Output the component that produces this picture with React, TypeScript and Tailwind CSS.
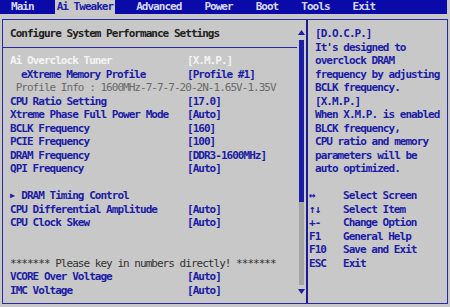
import React from "react";

const F = { fontFamily: '"DejaVu Sans Mono", "Liberation Mono", monospace' };

const tabs = ["Main", "Ai Tweaker", "Advanced", "Power", "Boot", "Tools", "Exit"];

type Row =
  | { kind: "item"; label: string; value?: string; sel?: boolean; indent?: string }
  | { kind: "info"; text: string }
  | { kind: "note"; text: string }
  | { kind: "blank" }
  | { kind: "sub"; label: string };

const rows: Row[] = [
  { kind: "item", label: "Ai Overclock Tuner", value: "[X.M.P.]", sel: true },
  { kind: "item", label: "eXtreme Memory Profile", value: "[Profile #1]", indent: "pl-[11px]" },
  { kind: "info", text: " Profile Info : 1600MHz-7-7-7-20-2N-1.65V-1.35V" },
  { kind: "item", label: "CPU Ratio Setting", value: "[17.0]" },
  { kind: "item", label: "Xtreme Phase Full Power Mode", value: "[Auto]" },
  { kind: "item", label: "BCLK Frequency", value: "[160]" },
  { kind: "item", label: "PCIE Frequency", value: "[100]" },
  { kind: "item", label: "DRAM Frequency", value: "[DDR3-1600MHz]" },
  { kind: "item", label: "QPI Frequency", value: "[Auto]" },
  { kind: "blank" },
  { kind: "sub", label: "DRAM Timing Control" },
  { kind: "item", label: "CPU Differential Amplitude", value: "[Auto]" },
  { kind: "item", label: "CPU Clock Skew", value: "[Auto]" },
  { kind: "blank" },
  { kind: "blank" },
  { kind: "note", text: "******* Please key in numbers directly! *******" },
  { kind: "item", label: "VCORE Over Voltage", value: "[Auto]" },
  { kind: "item", label: "IMC Voltage", value: "[Auto]" },
];

const help = [
  "[D.O.C.P.]",
  "It's designed to",
  "overclock DRAM",
  "frequency by adjusting",
  "BCLK frequency.",
  "[X.M.P.]",
  "When X.M.P. is enabled",
  "BLCK frequency,",
  "CPU ratio and memory",
  "parameters will be",
  "auto optimized.",
];

const keys: [string, string][] = [
  ["↔", "Select Screen"],
  ["↑↓", "Select Item"],
  ["+-", "Change Option"],
  ["F1", "General Help"],
  ["F10", "Save and Exit"],
  ["ESC", "Exit"],
];

export default function App() {
  return (
    <div
      className="w-[450px] h-[307px] bg-[#c8c8c8] overflow-hidden text-[11px] tracking-[-0.97px] leading-[13.5px] font-bold whitespace-pre"
      style={F}
    >
      {/* Top menu bar */}
      <div className="h-[14px] bg-[#0a0aa8] flex items-center pl-[9px] gap-[19px] mr-[3px]">
        {tabs.map((t) => (
          <div
            key={t}
            className={
              t === "Ai Tweaker"
                ? "px-[2px] h-[14px] flex items-center bg-[#c8c8c8] text-[#1c1ca6]"
                : "px-[2px] h-[14px] flex items-center text-[#d8d8ff]"
            }
          >
            {t}
          </div>
        ))}
      </div>

      {/* Frame */}
      <div className="mt-[5px] ml-[2px] w-[446px] h-[285px] border border-[#2828a0] flex">
        {/* Left panel */}
        <div className="w-[303px] flex">
          <div className="flex-1 pt-[7px]">
            <div className="pl-[7px] text-[#202020]">Configure System Performance Settings</div>
            <div className="h-[13.5px] flex items-center">
              <div className="w-full h-[1px] bg-[#2828a0]" />
            </div>
            {rows.map((r, i) => {
              if (r.kind === "blank") return <div key={i} className="h-[13.5px]" />;
              if (r.kind === "info")
                return (
                  <div key={i} className="pl-[7px] text-[#6a6a6a] font-normal">
                    {r.text}
                  </div>
                );
              if (r.kind === "note")
                return (
                  <div key={i} className="pl-[7px] text-[#333333] font-normal">
                    {r.text}
                  </div>
                );
              if (r.kind === "sub")
                return (
                  <div key={i} className="pl-[7px] text-[#1c1ca6] flex">
                    <span className="text-[8px] w-[11.3px] flex items-center">▶</span>
                    <span>{r.label}</span>
                  </div>
                );
              return (
                <div
                  key={i}
                  className={
                    "pl-[7px] flex " + (r.sel ? "text-[#f4f4f4]" : "text-[#1c1ca6]")
                  }
                >
                  <div className={"w-[177px] " + (r.indent ?? "")}>{r.label}</div>
                  <div>{r.value}</div>
                </div>
              );
            })}
          </div>
          {/* Scrollbar */}
          <div className="w-[9px] flex flex-col items-center pt-[10px]">
            <svg width="7" height="5" viewBox="0 0 7 5">
              <polygon points="3.5,0 7,5 0,5" fill="#1c1ca6" />
            </svg>
            <div className="mt-[5px] w-[5px] h-[162px] bg-[#1c1ca6]" />
            <div className="w-[5px] h-[83px] bg-[#a4a4a4]" />
            <svg className="mt-[4px]" width="7" height="5" viewBox="0 0 7 5">
              <polygon points="0,0 7,0 3.5,5" fill="#1c1ca6" />
            </svg>
          </div>
        </div>
        {/* Divider */}
        <div className="w-[2px] h-full bg-[#1c1c90]" />
        {/* Right panel */}
        <div className="flex-1 pt-[7px] text-[#1c1ca6]">
          <div className="pl-[7px]">
            {help.map((h, i) => (
              <div key={i}>{h}</div>
            ))}
          </div>
          <div className="h-[13.5px]" />
          <div className="pl-[1px]">
            {keys.map(([k, d]) => (
              <div key={k} className="flex">
                <div className="w-[34px]">{k}</div>
                <div>{d}</div>
              </div>
            ))}
          </div>
        </div>
      </div>
    </div>
  );
}
